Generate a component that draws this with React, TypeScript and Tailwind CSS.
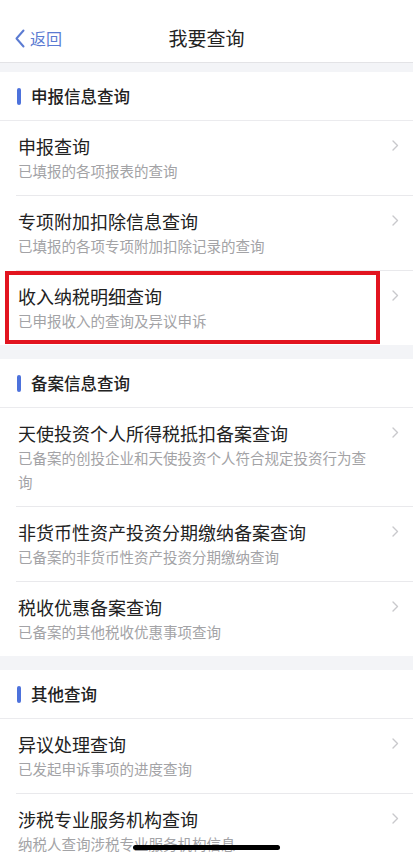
import React from "react";

interface QueryItem {
  title: string;
  desc: string;
  marked?: boolean;
}

interface QuerySection {
  name: string;
  items: QueryItem[];
}

const sections: QuerySection[] = [
  {
    name: "申报信息查询",
    items: [
      { title: "申报查询", desc: "已填报的各项报表的查询" },
      { title: "专项附加扣除信息查询", desc: "已填报的各项专项附加扣除记录的查询" },
      { title: "收入纳税明细查询", desc: "已申报收入的查询及异议申诉", marked: true },
    ],
  },
  {
    name: "备案信息查询",
    items: [
      {
        title: "天使投资个人所得税抵扣备案查询",
        desc: "已备案的创投企业和天使投资个人符合规定投资行为查询",
      },
      { title: "非货币性资产投资分期缴纳备案查询", desc: "已备案的非货币性资产投资分期缴纳查询" },
      { title: "税收优惠备案查询", desc: "已备案的其他税收优惠事项查询" },
    ],
  },
  {
    name: "其他查询",
    items: [
      { title: "异议处理查询", desc: "已发起申诉事项的进度查询" },
      { title: "涉税专业服务机构查询", desc: "纳税人查询涉税专业服务机构信息" },
    ],
  },
];

const Chevron: React.FC = () => (
  <svg width="7" height="11" viewBox="0 0 7 11" fill="none">
    <path d="M1 1l4.5 4.5L1 10" stroke="#c9c9cc" strokeWidth="1.4" strokeLinecap="round" strokeLinejoin="round" />
  </svg>
);

const Row: React.FC<{ item: QueryItem; last: boolean }> = ({ item, last }) => (
  <div className="relative pl-4">
    <div className={`flex items-start py-3 pr-[14px] ${last ? "" : "border-b border-[#e9e9ec]"}`}>
      <div className="flex-1 pl-[2px] pr-[22px]">
        <div className="text-[18px] leading-[26px] text-[#222]">{item.title}</div>
        <div className="text-[14.5px] leading-[24px] text-[#a3a3a6]">{item.desc}</div>
      </div>
      <div className="mt-[7px]">
        <Chevron />
      </div>
    </div>
    {item.marked && (
      <div className="pointer-events-none absolute left-[5px] top-0 h-[73px] w-[375px] border-4 border-[#e2141f]" />
    )}
  </div>
);

const Section: React.FC<{ section: QuerySection }> = ({ section }) => (
  <div className="bg-white">
    <div className="flex h-[49px] items-center border-b border-[#ebebee] pl-[17px]">
      <span className="h-[17px] w-[4px] rounded-full bg-[#4d72dc]" />
      <span className="ml-[10px] text-[16.5px] font-medium text-[#222]">{section.name}</span>
    </div>
    {section.items.map((item, i) => (
      <Row key={item.title} item={item} last={i === section.items.length - 1} />
    ))}
  </div>
);

export default function App() {
  return (
    <div className="relative h-[857px] w-[413px] overflow-hidden bg-[#f3f4f7] font-['Noto_Sans_CJK_SC',sans-serif]">
      {/* nav bar */}
      <div className="relative flex h-[63px] items-center justify-center border-b border-[#e3e3e6] bg-white pt-[14px]">
        <div className="absolute left-[15px] top-[28px] flex items-center">
          <svg width="10" height="19" viewBox="0 0 10 19" fill="none">
            <path d="M8.5 1.5L1.5 9.5l7 8" stroke="#5b7bd2" strokeWidth="2" strokeLinecap="round" strokeLinejoin="round" />
          </svg>
          <span className="ml-[5px] text-[16px] leading-[20px] text-[#5b7bd2]">返回</span>
        </div>
        <span className="text-[19px] text-[#222]">我要查询</span>
      </div>

      <div className="mt-[9px] flex flex-col gap-[14px]">
        {sections.map((s) => (
          <Section key={s.name} section={s} />
        ))}
      </div>

      {/* home indicator */}
      <div className="absolute bottom-[7px] left-[133px] h-[5px] w-[147px] rounded-full bg-black" />
    </div>
  );
}
